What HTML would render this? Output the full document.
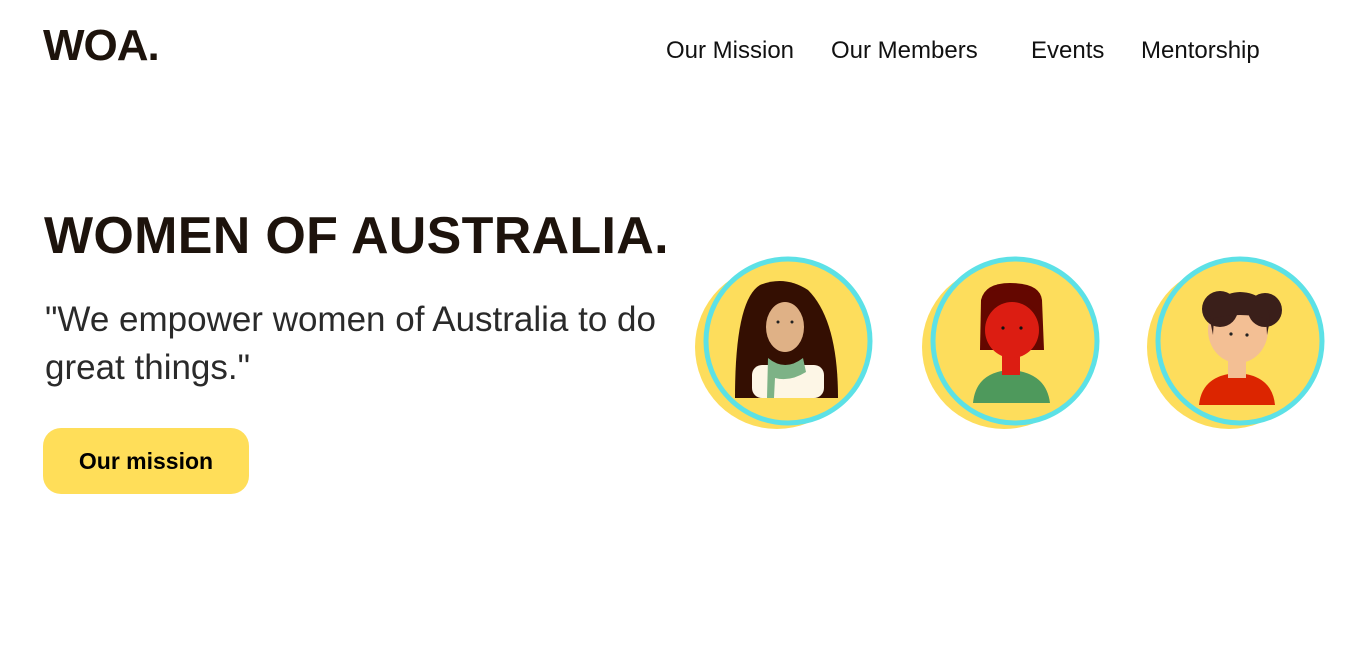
<!DOCTYPE html>
<html><head><meta charset="utf-8"><style>
*{margin:0;padding:0;box-sizing:border-box}
body{width:1350px;height:650px;background:#fff;position:relative;overflow:hidden;font-family:"Liberation Sans",sans-serif;color:#1d130c}
.logo{position:absolute;left:43px;top:21px;font-size:44px;font-weight:bold;letter-spacing:-1px}
.nav a{position:absolute;top:37px;font-size:24px;color:#111;text-decoration:none;font-weight:300}
h1{position:absolute;left:44px;top:206px;font-size:52px;font-weight:bold;letter-spacing:0.3px;white-space:nowrap}
.q{position:absolute;left:45px;top:296px;font-size:35px;line-height:48px;letter-spacing:0;font-weight:300;color:#2a2a2a;width:660px}
.btn{position:absolute;left:43px;top:428px;width:206px;height:66px;border-radius:18px;background:#FFDE59;font-size:23px;font-weight:bold;color:#000;text-align:center;line-height:66px}
svg{position:absolute;left:0;top:0}
</style></head><body>
<div class="logo">WOA.</div>
<div class="nav"><a style="left:666px">Our Mission</a><a style="left:831px">Our Members</a><a style="left:1031px">Events</a><a style="left:1141px">Mentorship</a></div>
<h1>WOMEN OF AUSTRALIA.</h1>
<div class="q">"We empower women of Australia to do great things."</div>
<div class="btn">Our mission</div>
<svg width="1350" height="650">
<g>
<circle cx="777" cy="347" r="82" fill="#FDDD5C"/>
<circle cx="788" cy="341" r="82" fill="#FDDD5C" stroke="#5CE1E6" stroke-width="5"/>
<path d="M735 398 Q735 300 760 285 Q785 275 808 290 Q838 320 838 398 Z" fill="#340f02"/>
<rect x="752" y="365" width="72" height="33" rx="10" fill="#fdf6e6"/>
<ellipse cx="785" cy="327" rx="19" ry="25" fill="#dfb186"/>
<path d="M768 358 Q785 372 803 358 L806 372 Q790 382 775 378 L774 398 L767 398 Z" fill="#7db286"/>
<circle cx="778" cy="322" r="1.5" fill="#222"/><circle cx="792" cy="322" r="1.5" fill="#222"/>
</g>
<g>
<circle cx="1004" cy="347" r="82" fill="#FDDD5C"/>
<circle cx="1015" cy="341" r="82" fill="#FDDD5C" stroke="#5CE1E6" stroke-width="5"/>
<path d="M973 403 Q976 372 1010 370 Q1046 372 1050 403 Z" fill="#4e995c"/>
<rect x="1002" y="350" width="18" height="25" fill="#dc1d12"/>
<path d="M980 350 L981 300 Q985 283 1010 283 Q1040 283 1042 300 L1044 350 Z" fill="#640700"/>
<ellipse cx="1012" cy="330" rx="27" ry="28" fill="#dc1d12"/>
<path d="M985 320 Q990 300 1012 300 Q1036 300 1040 320 L1040 300 Q1035 288 1012 288 Q988 288 985 300 Z" fill="#640700"/>
<circle cx="1003" cy="328" r="1.6" fill="#111"/><circle cx="1021" cy="328" r="1.6" fill="#111"/>
</g>
<g>
<circle cx="1229" cy="347" r="82" fill="#FDDD5C"/>
<circle cx="1240" cy="341" r="82" fill="#FDDD5C" stroke="#5CE1E6" stroke-width="5"/>
<path d="M1199 405 Q1202 375 1237 373 Q1272 375 1275 405 Z" fill="#dc2500"/>
<rect x="1228" y="350" width="18" height="28" fill="#f3bf94"/>
<ellipse cx="1238" cy="330" rx="30" ry="33" fill="#f3bf94"/>
<circle cx="1220" cy="309" r="18" fill="#3a1f1a"/><circle cx="1265" cy="310" r="17" fill="#3a1f1a"/>
<path d="M1210 320 Q1215 293 1240 292 Q1268 293 1270 320 L1267 335 L1266 318 Q1240 312 1214 318 L1213 335 Z" fill="#3a1f1a"/>
<circle cx="1231" cy="334" r="1.6" fill="#222"/><circle cx="1247" cy="335" r="1.6" fill="#222"/>
</g>
</svg>
</body></html>
